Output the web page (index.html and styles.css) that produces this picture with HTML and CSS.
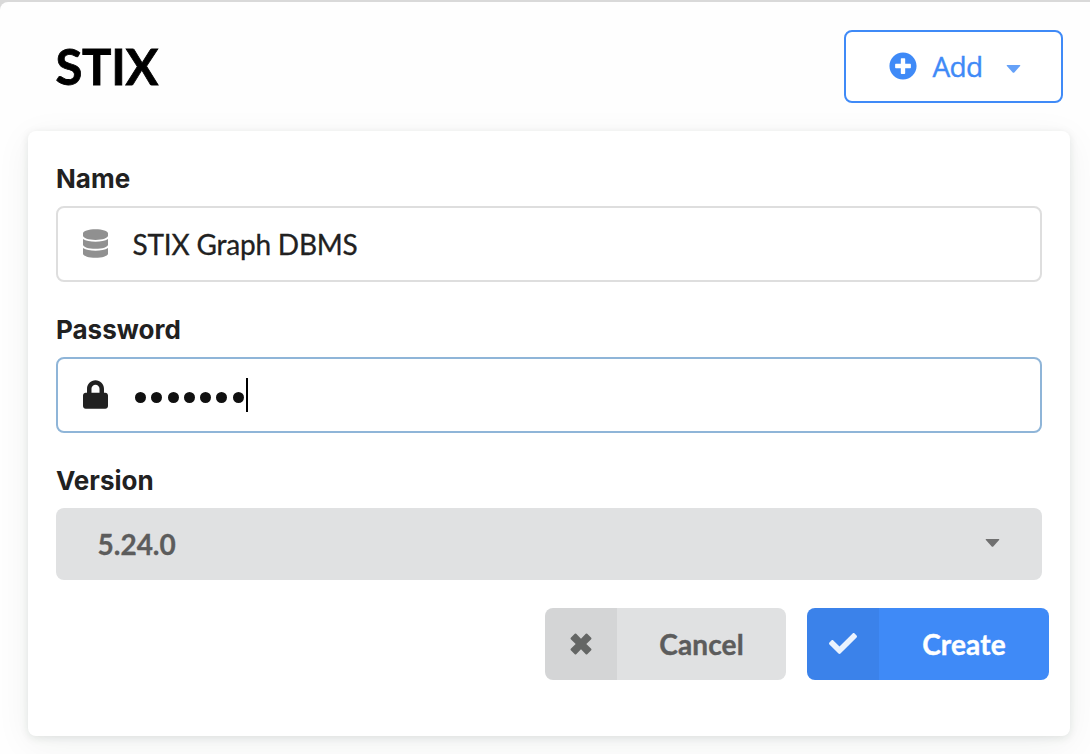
FILE: index.html
```html
<!DOCTYPE html>
<html lang="en">
<head>
<meta charset="utf-8">
<title>STIX</title>
<link rel="stylesheet" href="styles.css">
</head>
<body>
<main class="page">
  <header class="header">
    <h1 class="title">STIX</h1>
    <button class="add-button" type="button">
      <svg class="add-icon" viewBox="0 0 512 512"><path fill="currentColor" d="M256 8C119 8 8 119 8 256s111 248 248 248 248-111 248-248S393 8 256 8zm144 276c0 6.600-5.400 12-12 12h-92v92c0 6.600-5.400 12-12 12h-56c-6.600 0-12-5.400-12-12v-92h-92c-6.600 0-12-5.400-12-12v-56c0-6.600 5.400-12 12-12h92v-92c0-6.600 5.400-12 12-12h56c6.600 0 12 5.400 12 12v92h92c6.600 0 12 5.400 12 12v56z"/></svg>
      <span class="add-label">Add</span>
      <svg class="caret add-caret" viewBox="0 0 14 8"><path fill="currentColor" d="M.7 0h12.600q.9.300.3 1L8 7.300q-1 1-2 0L.4 1Q-.2.300.7 0z"/></svg>
    </button>
  </header>
  <form class="card">
    <div class="field">
      <div class="label">Name</div>
      <div class="input">
        <svg class="input-icon muted" viewBox="0 0 448 512"><path fill="currentColor" d="M448 73.143v45.714C448 159.143 347.667 192 224 192S0 159.143 0 118.857V73.143C0 32.857 100.333 0 224 0s224 32.857 224 73.143zM448 176v102.857C448 319.143 347.667 352 224 352S0 319.143 0 278.857V176c48.125 33.143 136.208 48.572 224 48.572S399.874 209.143 448 176zm0 160v102.857C448 479.143 347.667 512 224 512S0 479.143 0 438.857V336c48.125 33.143 136.208 48.572 224 48.572S399.874 369.143 448 336z"/></svg>
        <span class="value">STIX Graph DBMS</span>
      </div>
    </div>
    <div class="field">
      <div class="label">Password</div>
      <div class="input focused">
        <svg class="input-icon" viewBox="0 0 448 512"><path fill="currentColor" d="M400 224h-24v-72C376 68.200 307.800 0 224 0S72 68.200 72 152v72H48c-26.500 0-48 21.500-48 48v192c0 26.500 21.500 48 48 48h352c26.500 0 48-21.500 48-48V272c0-26.500-21.500-48-48-48zm-104 0H152v-72c0-39.700 32.300-72 72-72s72 32.300 72 72v72z"/></svg>
        <span class="dots"><i></i><i></i><i></i><i></i><i></i><i></i><i></i></span>
        <span class="cursor"></span>
      </div>
    </div>
    <div class="field">
      <div class="label">Version</div>
      <div class="select">
        <span>5.24.0</span>
        <svg class="caret" viewBox="0 0 14 8"><path fill="currentColor" d="M.7 0h12.600q.9.300.3 1L8 7.300q-1 1-2 0L.4 1Q-.2.300.7 0z"/></svg>
      </div>
    </div>
    <div class="actions">
      <button class="button cancel" type="button">
        <span class="button-icon"><svg class="cross" viewBox="0 0 22 22"><path fill="currentColor" d="M4.800.7Q5.500.2 6.200.8L11 5.700 15.800.8q.7-.6 1.400 0l4 4q.6.700 0 1.400L16.300 11l4.900 4.800q.6.700 0 1.400l-4 4q-.7.600-1.400 0L11 16.300l-4.800 4.900q-.7.600-1.400 0l-4-4q-.6-.7 0-1.400L5.700 11 .8 6.200q-.6-.7 0-1.400z"/></svg></span>
        <span class="button-text">Cancel</span>
      </button>
      <button class="button create" type="button">
        <span class="button-icon"><svg class="check" viewBox="0 64 512 384"><path fill="currentColor" d="M173.898 439.404l-166.400-166.400c-9.997-9.997-9.997-26.206 0-36.204l36.203-36.204c9.997-9.998 26.207-9.998 36.204 0L192 312.690 432.095 72.596c9.997-9.997 26.207-9.997 36.204 0l36.203 36.204c9.997 9.997 9.997 26.206 0 36.204l-294.400 294.401c-9.998 9.997-26.207 9.997-36.204-.001z"/></svg></span>
        <span class="button-text">Create</span>
      </button>
    </div>
  </form>
</main>
</body>
</html>
```
FILE: styles.css
```css
* { box-sizing: border-box; }
body {
  margin: 0;
  padding-top: 2px;
  height: 754px;
  overflow: hidden;
  background: #d9d9d9;
  font-family: Lato, sans-serif;
  font-size: 28px;
  color: #212121;
}
.page {
  height: 752px;
  padding: 28px 20px 0 28px;
  background: #fefefe;
  border-top-left-radius: 8px;
}
.header {
  display: flex;
  justify-content: space-between;
  align-items: flex-start;
  height: 101px;
  padding: 0 7px 0 27.500px;
}
.title {
  margin: 0;
  padding-top: 6px;
  font-size: 49px;
  line-height: 60px;
  font-weight: 700;
  letter-spacing: -.3px;
  -webkit-text-stroke: .8px #000;
  color: #000;
}
button { font-family: inherit; margin: 0; }
.add-button {
  display: flex;
  align-items: center;
  width: 219px;
  height: 73px;
  padding: 0 0 1px 43px;
  border: 2px solid #3f8af7;
  border-radius: 8px;
  background: #fff;
  color: #3f8af7;
}
.add-icon { width: 28px; height: 28px; }
.add-label {
  width: 51px;
  margin-left: 15px;
  font-family: "Open Sans", sans-serif;
  font-size: 28px;
  line-height: 34px;
  letter-spacing: -.7px;
  -webkit-text-stroke: .4px #3f8af7;
}
.caret { width: 15px; height: 8px; display: block; }
.add-caret { margin: 5px 0 0 23px; opacity: .8; }
.card {
  height: 605px;
  padding: 28px;
  border-radius: 8px;
  background: #fff;
  box-shadow: 0 2px 8px rgba(20, 35, 30, .1), 0 8px 36px rgba(20, 45, 38, .06);
}
.field { margin-bottom: 28px; }
.label {
  height: 40px;
  margin-bottom: 7px;
  padding-top: 4px;
  font-family: Inter, sans-serif;
  font-size: 26px;
  line-height: 32px;
  font-weight: 700;
}
.input {
  display: flex;
  align-items: center;
  height: 76px;
  padding-left: 25px;
  border: 2px solid #dedede;
  border-radius: 8px;
  background: #fff;
}
.focused { border-color: #8fb5d8; }
.input-icon { width: 25px; height: 29px; margin-bottom: 2px; }
.muted { color: #909090; }
.value {
  margin-left: 24.500px;
  line-height: 34px;
  letter-spacing: -.2px;
  -webkit-text-stroke: .3px #212121;
}
.dots { display: flex; gap: 5.300px; margin: 4px 0 0 27px; }
.dots i { width: 11px; height: 11px; border-radius: 50%; background: #101010; }
.cursor { width: 2px; height: 34px; margin-left: 2.200px; background: #000; }
.select {
  display: flex;
  align-items: center;
  justify-content: space-between;
  height: 72px;
  padding: 0 42px 0 41.500px;
  border-radius: 8px;
  background: #e0e1e2;
  color: #5c5c5c;
  font-weight: 700;
  -webkit-text-stroke: .3px #5c5c5c;
}
.select .caret { color: #707070; margin-bottom: 2px; }
.actions {
  display: flex;
  justify-content: flex-end;
  gap: 21px;
  margin-right: -7px;
}
.button {
  display: flex;
  height: 72px;
  padding: 0;
  border: 0;
  border-radius: 8px;
  overflow: hidden;
  font-size: 28px;
  font-weight: 700;
}
.cancel { width: 241px; background: #e0e1e2; color: #5c5c5c; }
.create { width: 242px; background: #3f8af7; color: #fff; }
.button-icon {
  display: flex;
  align-items: center;
  justify-content: center;
  width: 72px;
  height: 72px;
  padding-bottom: 1px;
  background: rgba(0, 0, 0, .05);
}
.button-text {
  flex: 1;
  line-height: 72px;
  text-align: center;
  letter-spacing: .15px;
  -webkit-text-stroke: .4px currentColor;
}
.cross { width: 22px; height: 22px; color: #646665; }
.check { width: 28px; height: 21px; color: #ebf3fe; }
```
